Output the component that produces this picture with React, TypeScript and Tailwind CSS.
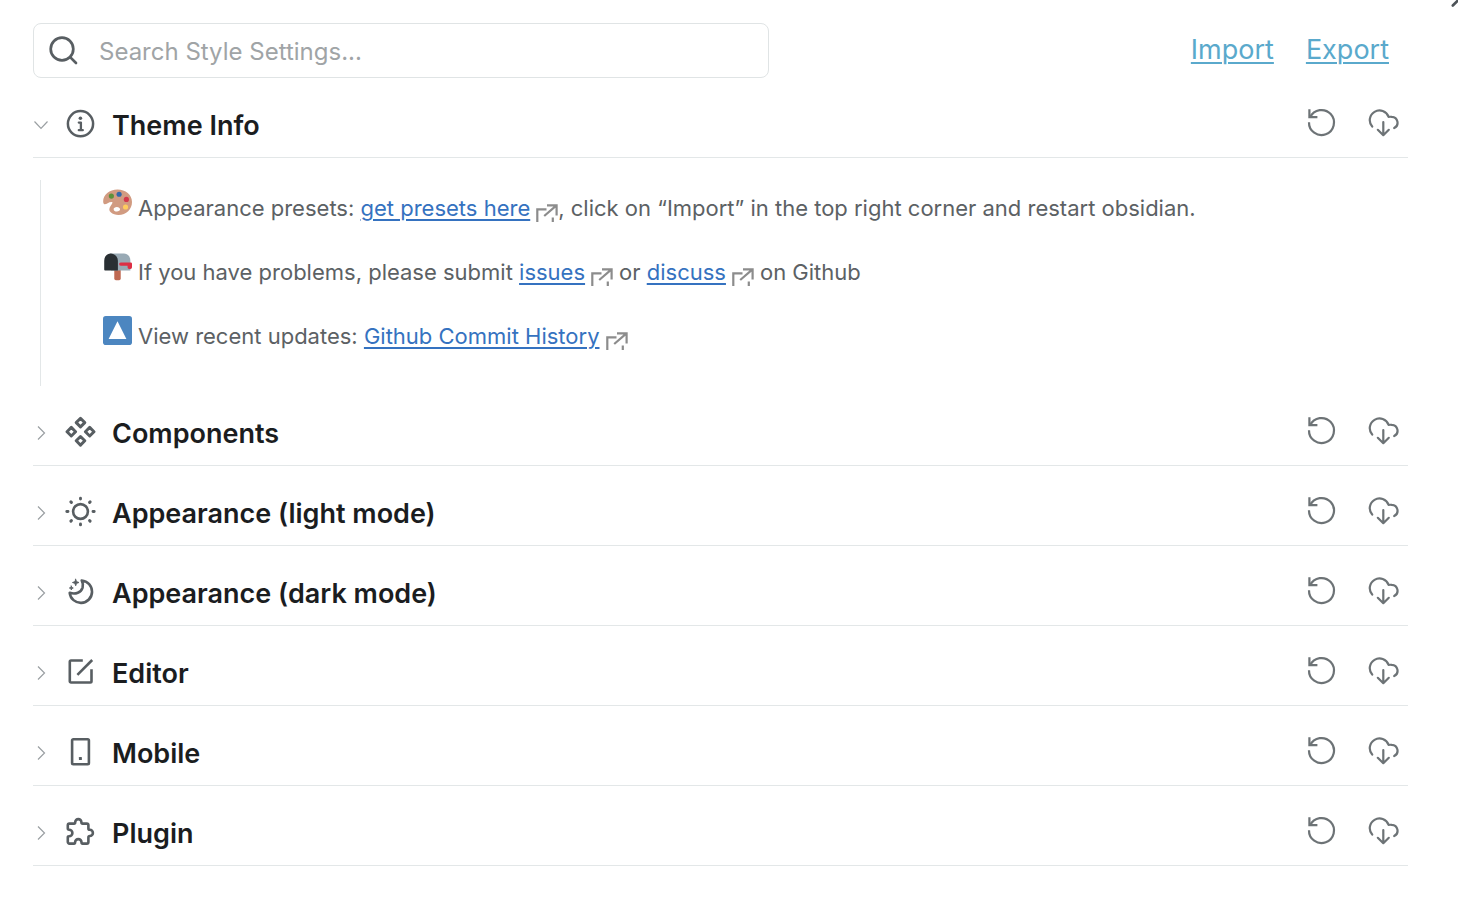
import { useState } from "react";
import type { ReactNode } from "react";

function Glyph({ children, className }: { children: ReactNode; className?: string }) {
  return (
    <svg
      viewBox="0 0 32 32"
      aria-hidden="true"
      fill="none"
      stroke="currentColor"
      strokeWidth="2.6"
      strokeLinecap="round"
      strokeLinejoin="round"
      className={`size-8 shrink-0 ${className ?? ""}`}
    >
      {children}
    </svg>
  );
}

const InfoGlyph = (
  <Glyph>
    <circle cx="16.5" cy="15.7" r="12.6" strokeWidth="2.5" />
    <circle cx="16.4" cy="10.300" r="1.800" fill="currentColor" stroke="none" />
    <path d="M14.800 14.600h2.100v7.400M14.800 22.200h4" strokeWidth="2.300" />
  </Glyph>
);

const ComponentsGlyph = (
  <Glyph>
    <path
      strokeLinejoin="round"
      strokeWidth="2.900"
      d="M16.500 2.300l4.300 4.300-4.300 4.300-4.300-4.300zM16.500 20.500l4.300 4.300-4.300 4.300-4.300-4.300zM7.300 11.400l4.300 4.300-4.300 4.300-4.300-4.300zM25.700 11.400l4.300 4.300-4.300 4.300-4.300-4.300z"
    />
  </Glyph>
);

const SunGlyph = (
  <Glyph>
    <circle cx="16.5" cy="15.5" r="7.400" />
    <path
      strokeWidth="2.900"
      d="M16.500 2.200v.9M16.500 28v.9M2.800 15.500h1.200M29 15.500h1.200M6.900 5.900l.5.5M25.600 24.600l.5.5M26.100 5.900l-.5.5M7.400 24.600l-.5.5"
    />
  </Glyph>
);

const MoonGlyph = (
  <Glyph>
    <path d="M17.700 4.500a11.200 11.200 0 1 1-12 12.300c6 2 11.400-.3 12.900-5.200c.7-2.600.2-5-.9-7.100z" />
    <path
      fill="currentColor"
      strokeWidth=".8"
      d="M11.700 3.200l.9 2.400 2.400.9-2.400.9-.9 2.400-.9-2.400-2.400-.9 2.400-.9zM7.300 10l.6 1.400 1.400.6-1.400.6-.6 1.400-.6-1.400-1.400-.6 1.400-.6z"
    />
  </Glyph>
);

const EditorGlyph = (
  <Glyph>
    <path strokeLinecap="butt" d="M18.800 4.500H7a1.200 1.200 0 0 0-1.200 1.200v19.600A1.200 1.200 0 0 0 7 26.500h19.300a1.200 1.200 0 0 0 1.200-1.200V13.200" />
    <path strokeLinecap="butt" d="M13.400 18.800L28.200 4" />
  </Glyph>
);

const MobileGlyph = (
  <Glyph>
    <rect x="8.1" y="3.2" width="16.8" height="25" rx="1.2" />
    <rect x="14.900" y="21" width="3" height="3" rx=".6" fill="currentColor" stroke="none" />
  </Glyph>
);

const PluginGlyph = (
  <Glyph>
    <path d="M5.400 7.600h4.600c1 0 1.200-.6 1.200-1.400a3.100 3.100 0 0 1 6.200 0c0 .8.200 1.400 1.200 1.400h4.200a1.600 1.600 0 0 1 1.600 1.600v3.200c0 1 .6 1.400 1.400 1.400a3.100 3.100 0 0 1 0 6.200c-.8 0-1.400.4-1.400 1.400v4.600a1.600 1.600 0 0 1-1.600 1.600h-4.200c-.8 0-1.100-.5-1.100-1.300a3.200 3.200 0 0 0-6.400 0c0 .8-.3 1.300-1.100 1.300H5.400a1.600 1.600 0 0 1-1.600-1.600v-4.600c0-.8.600-1.100 1.300-1.100a3.300 3.300 0 0 0 0-6.600c-.7 0-1.300-.3-1.300-1.100V9.200a1.600 1.600 0 0 1 1.600-1.600z" />
  </Glyph>
);

function ResetGlyph() {
  return (
    <Glyph>
      <path strokeWidth="2.200" strokeLinecap="butt" strokeLinejoin="miter" d="M4.400 3.200v8h8" />
      <path strokeWidth="2.200" strokeLinecap="butt" d="M5.200 11.200a12.500 12.500 0 1 1-1.200 5" />
    </Glyph>
  );
}

function CloudGlyph() {
  return (
    <Glyph>
      <path strokeWidth="2.200" d="M5.200 20.600A9.700 9.700 0 1 1 21.600 10.900c1-.2 2.100-.2 3.200 0a5.900 5.900 0 0 1 2.400 11.200" />
      <path strokeWidth="2.200" d="M16.300 16v13M10.800 23.800l5.500 5.400 5.500-5.400" />
    </Glyph>
  );
}

function ExternalGlyph({ tight = false }: { tight?: boolean }) {
  return (
    <svg
      viewBox="0 0 22 18"
      aria-hidden="true"
      fill="none"
      stroke="#8c8c8c"
      strokeWidth="2.200"
      className={`inline h-[18px] w-[22px] align-[-6px] ${tight ? "ml-1.5" : "mx-1.5"}`}
    >
      <path d="M10.500 5.400H1.300V18M11 1.400h9.600v10.200M20.200 1.700L8.200 12M16.800 13.400V18" />
    </svg>
  );
}

function Palette() {
  return (
    <svg viewBox="0 0 36 36" aria-hidden="true" className="h-[29px] w-[29px] shrink-0">
      <path
        fill="#D19B81"
        d="M18 2C8 2 .2 8.600.2 16.600c0 2.200.6 3.600 1.800 3.600 2.400 0 5-2.800 8.600-2.800 2.600 0 .2 2.800-1.400 5.200-1.600 2.500-2 5.400.4 7.600 2.300 2.200 6 3.400 9.600 3.400C29 33.600 36 26.400 36 17.400 36 8.600 28 2 18 2zm-.8 27.200c-2.200 0-4-1.300-4-2.900s1.800-2.800 4-2.800 4 1.300 4 2.900-1.800 2.800-4 2.800z"
      />
      <circle cx="10.400" cy="10" r="3.200" fill="#5C913B" />
      <circle cx="20" cy="7.800" r="3.200" fill="#3467A8" />
      <circle cx="29" cy="14.200" r="3.200" fill="#D4384B" />
      <circle cx="28" cy="23.600" r="3.200" fill="#FFCC5D" />
    </svg>
  );
}

function Mailbox() {
  return (
    <svg viewBox="0 0 36 36" aria-hidden="true" className="h-[29px] w-[29px] shrink-0">
      <path fill="#BF6952" d="M14 20h8v13a2 2 0 0 1-2 2h-4a2 2 0 0 1-2-2z" />
      <path fill="#99AAB5" d="M9 2h17c5 0 8 4 8 9v12H10z" />
      <path fill="#292F33" d="M9.500 2C4.500 2 1.500 6 1.500 11v10.500c0 1 .5 1.500 1.500 1.500h15.500V11c0-5-4-9-9-9z" />
      <path fill="#DD2E44" d="M22 13h12.500a1.500 1.500 0 0 1 1.500 1.500V19a2 2 0 0 1-2 2h-1.500a2 2 0 0 1-2-2v-2H22a2 2 0 0 1 0-4z" />
    </svg>
  );
}

function UpButton() {
  return (
    <svg viewBox="0 0 36 36" aria-hidden="true" className="h-[29px] w-[29px] shrink-0">
      <rect width="36" height="36" rx="3.500" fill="#4C86C0" />
      <path fill="#fff" d="M18 6.500L29 28.500H7z" />
    </svg>
  );
}

function TextLink({ children }: { children: ReactNode }) {
  return (
    <a href="#" className="text-[#3572c0] underline decoration-2 underline-offset-3">
      {children}
    </a>
  );
}

function Note({ icon, children }: { icon: ReactNode; children: ReactNode }) {
  return (
    <li className="flex items-start gap-1.5">
      {icon}
      <p className="pt-1">{children}</p>
    </li>
  );
}

function ThemeInfo() {
  return (
    <div className="mt-[22px] ml-[7px] border-l border-[#e3e7e8] pt-2 pb-[34px] pl-[62px]">
      <ul className="flex flex-col gap-7 text-[22px] leading-8 text-[#5c6164]">
        <Note icon={<Palette />}>
          Appearance presets: <TextLink>get presets here</TextLink>
          <ExternalGlyph tight />
          , click on “Import” in the top right corner and restart obsidian.
        </Note>
        <Note icon={<Mailbox />}>
          If you have problems, please submit <TextLink>issues</TextLink>
          <ExternalGlyph />
          or <TextLink>discuss</TextLink>
          <ExternalGlyph />
          on Github
        </Note>
        <Note icon={<UpButton />}>
          View recent updates: <TextLink>Github Commit History</TextLink>
          <ExternalGlyph />
        </Note>
      </ul>
    </div>
  );
}

interface SectionProps {
  title: string;
  icon: ReactNode;
  initiallyOpen?: boolean;
  children?: ReactNode;
}

function Section({ title, icon, initiallyOpen = false, children }: SectionProps) {
  const [open, setOpen] = useState(initiallyOpen);
  return (
    <section>
      <header className="flex h-20 items-start justify-between border-b border-[#e3e7e8] pr-[9px]">
        <h2 className="pt-[30px]">
          <button type="button" aria-expanded={open} onClick={() => setOpen(!open)} className="flex items-start text-left">
            <svg
              viewBox="0 0 16 16"
              aria-hidden="true"
              fill="none"
              stroke="#9a9fa2"
              strokeWidth="1.2"
              className="mt-[9px] mr-[15px] size-4"
            >
              <path d={open ? "M1.5 4.5l6.5 6.8 6.5-6.8" : "M5 1.5l6.5 6.5L5 14.5"} />
            </svg>
            <span className="text-[#585e62]">{icon}</span>
            <span className="ml-4 text-[27px] leading-9 font-semibold text-[#1b1d1f]">{title}</span>
          </button>
        </h2>
        <div className="flex gap-[30px] pt-7 text-[#6d7376]">
          <button type="button" aria-label={`Reset ${title}`}>
            <ResetGlyph />
          </button>
          <button type="button" aria-label={`Export ${title}`}>
            <CloudGlyph />
          </button>
        </div>
      </header>
      {open && children}
    </section>
  );
}

export default function App() {
  return (
    <div className="relative min-h-screen overflow-hidden bg-white pt-[23px] pr-[50px] pb-10 pl-[33px] font-['Inter',sans-serif]">
      <button type="button" aria-label="Close" className="absolute -top-3 -right-3 text-[#4d5358]">
        <svg viewBox="0 0 20 20" aria-hidden="true" fill="none" stroke="currentColor" strokeWidth="2.6" strokeLinecap="round" className="size-5">
          <path d="M2.8 17.500l15-15M2.800 2.500l15 15" />
        </svg>
      </button>
      <div className="flex items-center justify-between pr-[19px]">
        <label className="flex h-[55px] w-[736px] items-center rounded-lg border border-[#e0e4e5] pl-3.5">
          <Glyph className="text-[#585e62]">
            <circle cx="14" cy="14" r="11.300" strokeWidth="2.700" />
            <path d="M22.400 22.400l5.600 5.600" strokeWidth="2.700" />
          </Glyph>
          <input
            type="search"
            aria-label="Search Style Settings"
            placeholder="Search Style Settings..."
            className="ml-[19px] min-w-0 flex-1 bg-transparent pt-0.5 text-2xl text-[#5c6164] outline-none placeholder:text-[#a0a4a6]"
          />
        </label>
        <nav className="flex gap-8 text-[27px] text-[#5aa9cc]">
          <a href="#" className="underline decoration-2 underline-offset-3">Import</a>
          <a href="#" className="underline decoration-2 underline-offset-3">Export</a>
        </nav>
      </div>
      <main>
        <Section title="Theme Info" icon={InfoGlyph} initiallyOpen>
          <ThemeInfo />
        </Section>
        <Section title="Components" icon={ComponentsGlyph} />
        <Section title="Appearance (light mode)" icon={SunGlyph} />
        <Section title="Appearance (dark mode)" icon={MoonGlyph} />
        <Section title="Editor" icon={EditorGlyph} />
        <Section title="Mobile" icon={MobileGlyph} />
        <Section title="Plugin" icon={PluginGlyph} />
      </main>
    </div>
  );
}
